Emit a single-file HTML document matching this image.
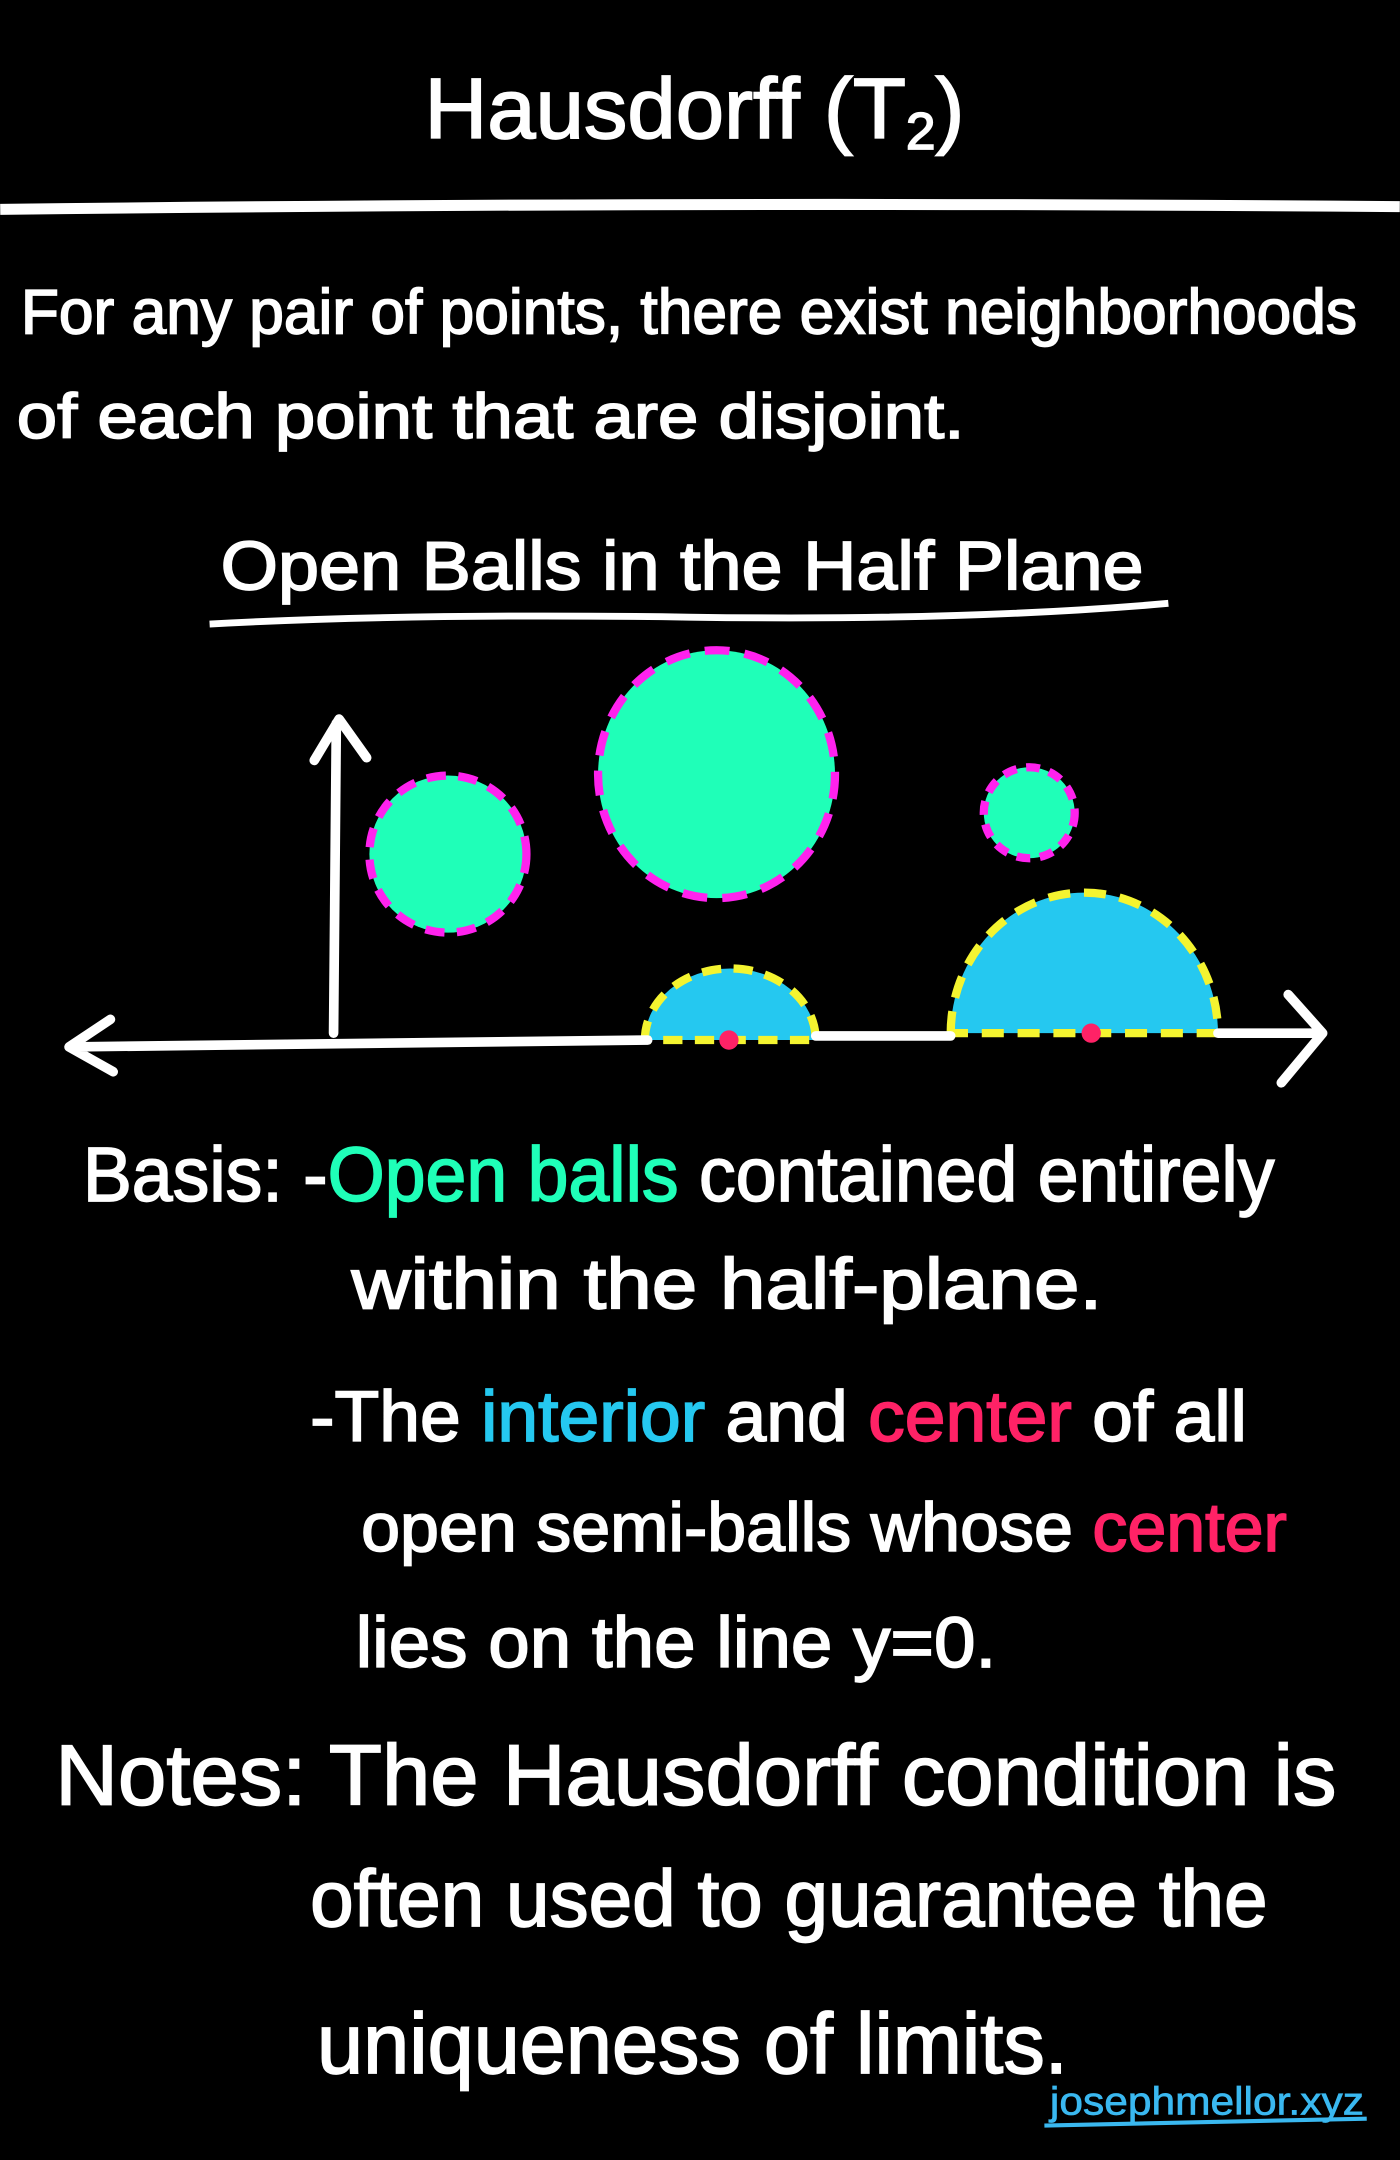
<!DOCTYPE html>
<html><head><meta charset="utf-8"><style>
html,body{margin:0;padding:0;background:#000;}
svg{display:block;}
text{font-family:"Liberation Sans",sans-serif;fill:#fff;stroke:#fff;stroke-width:1.2;}
</style></head><body>
<svg width="1400" height="2160" viewBox="0 0 1016 1568" xmlns="http://www.w3.org/2000/svg">
<rect width="1016" height="1568" fill="#000"/>
<text x="308" y="100" font-size="62" textLength="392" lengthAdjust="spacingAndGlyphs">Hausdorff (T<tspan font-size="38" dy="8">2</tspan><tspan dy="-8">)</tspan></text>
<path d="M0 152 Q500 146 1016 150" stroke="#fff" stroke-width="8" fill="none"/>
<text x="15" y="242" font-size="46" textLength="970" lengthAdjust="spacingAndGlyphs">For any pair of points, there exist neighborhoods</text>
<text x="12" y="318" font-size="46" textLength="688" lengthAdjust="spacingAndGlyphs">of each point that are disjoint.</text>
<text x="160" y="428" font-size="50" textLength="670" lengthAdjust="spacingAndGlyphs">Open Balls in the Half Plane</text>
<path d="M152 453 Q300 445 500 448 T848 438" stroke="#fff" stroke-width="5" fill="none"/>
<circle cx="325" cy="620" r="57" fill="#1fffb8" stroke="#ff22ee" stroke-width="6" stroke-dasharray="14 9"/>
<ellipse cx="520" cy="562" rx="86" ry="90" fill="#1fffb8" stroke="#ff22ee" stroke-width="6" stroke-dasharray="18 11"/>
<circle cx="747" cy="590" r="33" fill="#1fffb8" stroke="#ff22ee" stroke-width="6" stroke-dasharray="10 7"/>
<path d="M468 755 A62 52 0 0 1 592 755 Z" fill="#25c8f0" stroke="#f4f430" stroke-width="6" stroke-dasharray="14 9"/>
<path d="M690 750 A95 100 0 0 1 884 750 Z" fill="#25c8f0" stroke="#f4f430" stroke-width="6" stroke-dasharray="16 10"/>
<path d="M242 750 L244 525 M228 552 L246 522 L266 550" stroke="#fff" stroke-width="7" fill="none" stroke-linecap="round" stroke-linejoin="round"/>
<path d="M50 760 L470 755 M592 752 L690 752 M884 750 L958 750 M80 740 L50 760 L82 778 M935 722 L960 750 L930 786" stroke="#fff" stroke-width="7" fill="none" stroke-linecap="round" stroke-linejoin="round"/>
<circle cx="529" cy="755" r="7" fill="#ff2266"/>
<circle cx="792" cy="750" r="7" fill="#ff2266"/>
<text x="60" y="872" font-size="56" textLength="865" lengthAdjust="spacingAndGlyphs">Basis: -<tspan fill="#1fffb8" stroke="#1fffb8">Open balls</tspan> contained entirely</text>
<text x="255" y="950" font-size="52" textLength="545" lengthAdjust="spacingAndGlyphs">within the half-plane.</text>
<text x="225" y="1046" font-size="52" textLength="680" lengthAdjust="spacingAndGlyphs">-The <tspan fill="#25c8f0" stroke="#25c8f0">interior</tspan> and <tspan fill="#ff2266" stroke="#ff2266">center</tspan> of all</text>
<text x="262" y="1126" font-size="50" textLength="672" lengthAdjust="spacingAndGlyphs">open semi-balls whose <tspan fill="#ff2266" stroke="#ff2266">center</tspan></text>
<text x="258" y="1210" font-size="52" textLength="465" lengthAdjust="spacingAndGlyphs">lies on the line y=0.</text>
<text x="40" y="1310" font-size="62" textLength="930" lengthAdjust="spacingAndGlyphs">Notes: The Hausdorff condition is</text>
<text x="225" y="1398" font-size="58" textLength="695" lengthAdjust="spacingAndGlyphs">often used to guarantee the</text>
<text x="230" y="1505" font-size="62" textLength="545" lengthAdjust="spacingAndGlyphs">uniqueness of limits.</text>
<text x="762" y="1535" font-size="28" style="fill:#3ab8f0;stroke:#3ab8f0;stroke-width:0.5" textLength="228" lengthAdjust="spacingAndGlyphs">josephmellor.xyz</text>
<path d="M758 1543 L992 1538" stroke="#3ab8f0" stroke-width="3"/>
</svg>
</body></html>
